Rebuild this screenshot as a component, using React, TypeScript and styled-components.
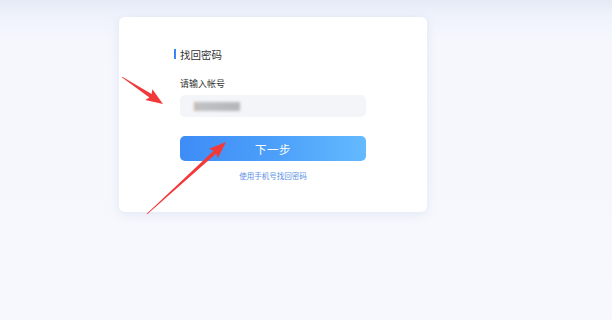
import React from 'react';
import styled, { createGlobalStyle } from 'styled-components';

const GlobalStyle = createGlobalStyle`
  html, body {
    margin: 0;
    padding: 0;
  }
  body {
    width: 612px;
    height: 320px;
    overflow: hidden;
    font-family: "Noto Sans CJK SC", "Noto Sans", sans-serif;
    background: linear-gradient(180deg, #e4e9f6 0px, #eef2fb 14px, #f5f7fd 40px, #f7f8fd 100%);
  }
`;

const Page = styled.div`
  position: relative;
  width: 612px;
  height: 320px;
  padding: 17px 0 0 119px;
  box-sizing: border-box;
`;

const Card = styled.section`
  width: 308px;
  height: 195px;
  box-sizing: border-box;
  padding: 30px 0 0 61px;
  background: #ffffff;
  border-radius: 6px;
  box-shadow: 0 2px 10px rgba(200, 210, 235, 0.45);
  display: flex;
  flex-direction: column;
`;

const Title = styled.h2`
  margin: 0;
  display: flex;
  align-items: center;
  gap: 4px;
  height: 14px;
  font-size: 10.5px;
  font-weight: 400;
  color: #333;
  margin-left: -6px;
  &::before {
    content: '';
    width: 2px;
    height: 10px;
    background: #3b86f6;
  }
`;

const Label = styled.div`
  margin-top: 16px;
  font-size: 9px;
  line-height: 14px;
  color: #333;
`;

const Input = styled.div`
  margin-top: 4px;
  width: 186px;
  height: 22px;
  border-radius: 5px;
  background: #f4f5f9;
  display: flex;
  align-items: center;
  padding-left: 14px;
  box-sizing: border-box;
`;

const Blur = styled.span<{ $w: number }>`
  display: block;
  width: ${(p) => p.$w}px;
  height: 9px;
  background: linear-gradient(90deg, #c9a48a 0px, #b8b9bc 4px, #a9abaf 100%);
  filter: blur(1.5px);
  opacity: 0.85;
`;

const Button = styled.button`
  margin-top: 19px;
  width: 186px;
  height: 25px;
  border: none;
  border-radius: 5px;
  background: linear-gradient(90deg, #3e8cf7 0%, #4c9ff9 50%, #64baff 100%);
  color: #fff;
  font-family: inherit;
  font-size: 11.5px;
  letter-spacing: 0.5px;
  padding: 0;
`;

const Link = styled.a`
  margin-top: 8px;
  width: 186px;
  text-align: center;
  font-size: 7.5px;
  line-height: 14px;
  color: #5a8fe6;
`;

const Overlay = styled.svg`
  position: absolute;
  left: 0;
  top: 0;
  pointer-events: none;
`;

function arrowPoints(tx: number, ty: number, hx: number, hy: number) {
  const dx = hx - tx;
  const dy = hy - ty;
  const len = Math.hypot(dx, dy);
  const ux = dx / len;
  const uy = dy / len;
  const nx = -uy;
  const ny = ux;
  const headLen = 15;
  const bx = hx - ux * headLen;
  const by = hy - uy * headLen;
  const pts = [
    [tx + nx * 0.4, ty + ny * 0.4],
    [bx + nx * 2, by + ny * 2],
    [bx + nx * 6.5 - ux * 2, by + ny * 6.5 - uy * 2],
    [hx, hy],
    [bx - nx * 6.5 - ux * 2, by - ny * 6.5 - uy * 2],
    [bx - nx * 2, by - ny * 2],
    [tx - nx * 0.4, ty - ny * 0.4],
  ];
  return pts.map((p) => p.join(',')).join(' ');
}

const App: React.FC = () => {
  return (
    <>
      <GlobalStyle />
      <Page>
        <Card>
          <Title>找回密码</Title>
          <Label>请输入帐号</Label>
          <Input>
            <Blur $w={46} />
          </Input>
          <Button>下一步</Button>
          <Link>使用手机号找回密码</Link>
        </Card>
        <Overlay width="612" height="320" viewBox="0 0 612 320">
          <polygon points={arrowPoints(122, 77, 163, 104)} fill="#f2393a" />
          <polygon points={arrowPoints(147, 214, 226, 142)} fill="#f2393a" />
        </Overlay>
      </Page>
    </>
  );
};

export default App;
